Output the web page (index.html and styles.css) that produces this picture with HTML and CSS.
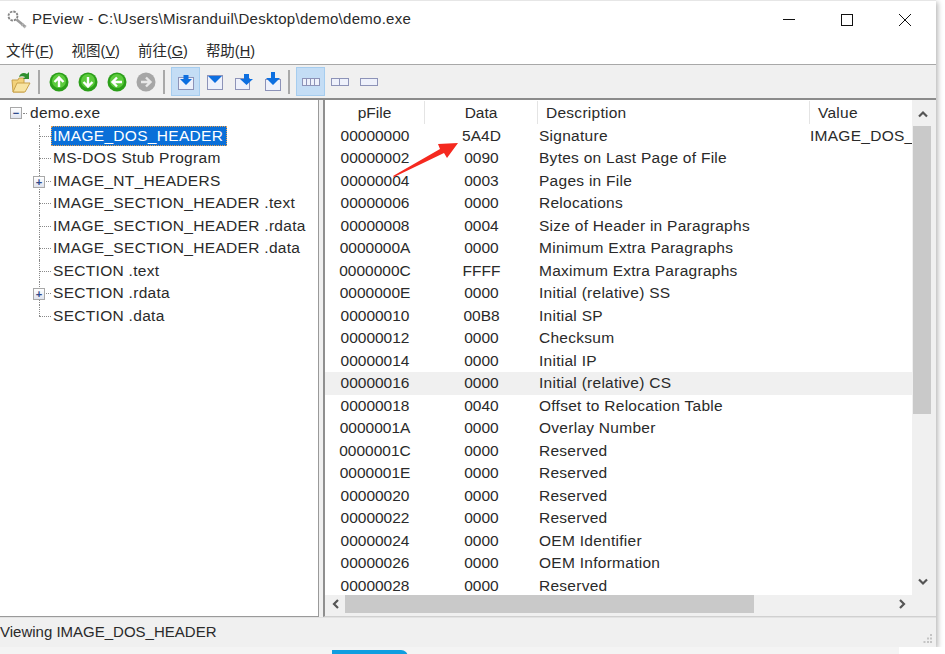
FILE: index.html
```html
<!DOCTYPE html>
<html lang="en">
<head>
<meta charset="utf-8">
<title>PEview</title>
<link rel="stylesheet" href="styles.css">
</head>
<body>
<div class="window">
  <header class="titlebar">
    <svg class="appicon" width="22" height="22" viewBox="0 0 22 22">
      <circle cx="7" cy="8" r="4.500" fill="none" stroke="#858585" stroke-width="1.800" stroke-dasharray="2.500 1"/>
      <path d="M10.500 11.500l9 7.500" stroke="#9a9a9a" stroke-width="2.600"/>
      <path d="M15.500 18l2-2.500M18 20l2-2.500" stroke="#b5b5b5" stroke-width="1.400"/>
    </svg>
    <span class="title">PEview - C:\Users\Misranduil\Desktop\demo\demo.exe</span>
    <div class="winctl">
      <svg width="14" height="14" viewBox="0 0 14 14"><path d="M1 6.500h12" stroke="#111" fill="none"/></svg>
      <svg width="14" height="14" viewBox="0 0 14 14"><rect x="1.500" y="1.500" width="11" height="11" stroke="#111" fill="none"/></svg>
      <svg width="14" height="14" viewBox="0 0 14 14"><path d="M1 1l12 12M13 1L1 13" stroke="#111" fill="none"/></svg>
    </div>
  </header>
  <nav class="menubar">
    <span>文件(<u>F</u>)</span><span>视图(<u>V</u>)</span><span>前往(<u>G</u>)</span><span>帮助(<u>H</u>)</span>
  </nav>
  <div class="toolbar">
    <svg class="tool open" width="20" height="24" viewBox="1 0 20 24">
      <path d="M2 10h6l1-2h5v14H3z" fill="#f3d27a" stroke="#c9a24a"/>
      <path d="M3 22l4-9h13l-5 9z" fill="#f8e4a3" stroke="#c9a24a"/>
      <path d="M9 7c1-4 5-5 8-3l2-2v7h-6l2-2c-2-1-4-1-6 0z" fill="#2f8f2f"/>
    </svg>
    <i class="sep first"></i>
    <svg class="nav" width="20" height="20" viewBox="0 0 20 20"><circle cx="10" cy="10" r="9.500" fill="#2c9f1a"/><circle cx="10" cy="9" r="7" fill="#5ccb3d"/><path d="M10 15V6M5.500 10L10 5.500l4.500 4.500" stroke="#fff" stroke-width="2.400" fill="none"/></svg>
    <svg class="nav" width="20" height="20" viewBox="0 0 20 20"><circle cx="10" cy="10" r="9.500" fill="#2c9f1a"/><circle cx="10" cy="9" r="7" fill="#5ccb3d"/><path d="M10 5v9M5.500 10L10 14.500l4.500-4.500" stroke="#fff" stroke-width="2.400" fill="none"/></svg>
    <svg class="nav" width="20" height="20" viewBox="0 0 20 20"><circle cx="10" cy="10" r="9.500" fill="#2c9f1a"/><circle cx="10" cy="9" r="7" fill="#5ccb3d"/><path d="M15 10H6M10 5.500L5.500 10l4.500 4.500" stroke="#fff" stroke-width="2.400" fill="none"/></svg>
    <svg class="nav" width="20" height="20" viewBox="0 0 20 20"><circle cx="10" cy="10" r="9.500" fill="#a6a6a6"/><path d="M5 10h9M10 5.500l4.500 4.500-4.500 4.500" stroke="#e8e8e8" stroke-width="2.400" fill="none"/></svg>
    <i class="sep second"></i>
    <span class="btn on">
      <svg width="20" height="20" viewBox="0 0 20 20"><rect x="2.500" y="5.500" width="15" height="12" fill="#eef1fb" stroke="#8d93b8"/><path d="M7.500 3h5v4h3.500L10 13 4 7h3.500z" fill="#0d6fe0"/></svg>
    </span>
    <span class="btn">
      <svg width="20" height="20" viewBox="0 0 20 20"><rect x="2.500" y="3.500" width="15" height="14" fill="#eef1fb" stroke="#8d93b8"/><path d="M3 4h14l-7 7z" fill="#0d6fe0"/></svg>
    </span>
    <span class="btn">
      <svg width="20" height="20" viewBox="0 0 20 20"><rect x="1.500" y="6.500" width="14" height="11" fill="#eef1fb" stroke="#8d93b8"/><path d="M10 2h5v5h4l-6.500 6L6 7h4z" fill="#0d6fe0"/></svg>
    </span>
    <span class="btn">
      <svg width="20" height="20" viewBox="0 0 20 20"><rect x="2.500" y="7.500" width="15" height="11" fill="#eef1fb" stroke="#8d93b8"/><path d="M8 0h4v6h5l-7 7-7-7h5z" fill="#0d6fe0"/></svg>
    </span>
    <i class="sep third"></i>
    <span class="btn on lay">
      <svg width="18" height="10" viewBox="0 0 18 10"><rect x=".5" y="1.500" width="17" height="7" fill="#eef1fb" stroke="#8d93b8"/><path d="M4.500 2v6M8.500 2v6M12.500 2v6" stroke="#8d93b8"/></svg>
    </span>
    <span class="btn lay">
      <svg width="18" height="10" viewBox="0 0 18 10"><rect x=".5" y="1.500" width="17" height="7" fill="#eef1fb" stroke="#8d93b8"/><path d="M8.500 2v6" stroke="#8d93b8"/></svg>
    </span>
    <span class="btn lay">
      <svg width="18" height="10" viewBox="0 0 18 10"><rect x=".5" y="1.500" width="17" height="7" fill="#eef1fb" stroke="#8d93b8"/></svg>
    </span>
  </div>
  <main class="panes">
    <section class="tree">
      <div class="root"><b class="box">−</b><span class="lead"></span><span>demo.exe</span></div>
      <div class="node"><span class="sel">IMAGE_DOS_HEADER</span></div>
      <div class="node"><span>MS-DOS Stub Program</span></div>
      <div class="node"><b class="box sub">+</b><span>IMAGE_NT_HEADERS</span></div>
      <div class="node"><span>IMAGE_SECTION_HEADER .text</span></div>
      <div class="node"><span>IMAGE_SECTION_HEADER .rdata</span></div>
      <div class="node"><span>IMAGE_SECTION_HEADER .data</span></div>
      <div class="node"><span>SECTION .text</span></div>
      <div class="node"><b class="box sub">+</b><span>SECTION .rdata</span></div>
      <div class="node last"><span>SECTION .data</span></div>
    </section>
    <section class="list">
      <div class="listmain">
        <div class="rows">
          <div class="row head"><span>pFile</span><span>Data</span><span>Description</span><span>Value</span></div>
          <div class="row"><span>00000000</span><span>5A4D</span><span>Signature</span><span>IMAGE_DOS_</span></div>
          <div class="row"><span>00000002</span><span>0090</span><span>Bytes on Last Page of File</span><span></span></div>
          <div class="row"><span>00000004</span><span>0003</span><span>Pages in File</span><span></span></div>
          <div class="row"><span>00000006</span><span>0000</span><span>Relocations</span><span></span></div>
          <div class="row"><span>00000008</span><span>0004</span><span>Size of Header in Paragraphs</span><span></span></div>
          <div class="row"><span>0000000A</span><span>0000</span><span>Minimum Extra Paragraphs</span><span></span></div>
          <div class="row"><span>0000000C</span><span>FFFF</span><span>Maximum Extra Paragraphs</span><span></span></div>
          <div class="row"><span>0000000E</span><span>0000</span><span>Initial (relative) SS</span><span></span></div>
          <div class="row"><span>00000010</span><span>00B8</span><span>Initial SP</span><span></span></div>
          <div class="row"><span>00000012</span><span>0000</span><span>Checksum</span><span></span></div>
          <div class="row"><span>00000014</span><span>0000</span><span>Initial IP</span><span></span></div>
          <div class="row hot"><span>00000016</span><span>0000</span><span>Initial (relative) CS</span><span></span></div>
          <div class="row"><span>00000018</span><span>0040</span><span>Offset to Relocation Table</span><span></span></div>
          <div class="row"><span>0000001A</span><span>0000</span><span>Overlay Number</span><span></span></div>
          <div class="row"><span>0000001C</span><span>0000</span><span>Reserved</span><span></span></div>
          <div class="row"><span>0000001E</span><span>0000</span><span>Reserved</span><span></span></div>
          <div class="row"><span>00000020</span><span>0000</span><span>Reserved</span><span></span></div>
          <div class="row"><span>00000022</span><span>0000</span><span>Reserved</span><span></span></div>
          <div class="row"><span>00000024</span><span>0000</span><span>OEM Identifier</span><span></span></div>
          <div class="row"><span>00000026</span><span>0000</span><span>OEM Information</span><span></span></div>
          <div class="row"><span>00000028</span><span>0000</span><span>Reserved</span><span></span></div>
        </div>
        <div class="vbar">
          <svg class="arrow" width="12" height="8" viewBox="0 0 12 8"><path d="M2 6.500l4-4 4 4" stroke="#555" stroke-width="2.200" fill="none"/></svg>
          <div class="vtrack"><div class="vthumb"></div></div>
          <svg class="arrow" width="12" height="8" viewBox="0 0 12 8"><path d="M2 1.500l4 4 4-4" stroke="#555" stroke-width="2.200" fill="none"/></svg>
        </div>
      </div>
      <div class="hbar">
        <svg class="arrow" width="8" height="12" viewBox="0 0 8 12"><path d="M6 2L2 6l4 4" stroke="#555" stroke-width="2.200" fill="none"/></svg>
        <div class="htrack"><div class="hthumb"></div></div>
        <svg class="arrow" width="8" height="12" viewBox="0 0 8 12"><path d="M2 2l4 4-4 4" stroke="#555" stroke-width="2.200" fill="none"/></svg>
      </div>
    </section>
    <svg class="redarrow" width="68" height="38" viewBox="0 0 68 38"><path d="M1 36L48 9 46 4l20-1L55 18l-3-5L2 37z" fill="#f5291f"/></svg>
  </main>
  <footer class="status">
    <span>Viewing IMAGE_DOS_HEADER</span>
    <svg class="grip" width="12" height="12" viewBox="0 0 12 12"><path d="M9 1h2v2H9zM6 4.500h2v2H6zM9 4.500h2v2H9zM2.500 8h2v2h-2zM6 8h2v2H6zM9 8h2v2H9z" fill="#c4c4c4"/></svg>
  </footer>
</div>
<div class="under"><div class="bluetab"></div></div>
</body>
</html>
```

FILE: styles.css
```css
* { box-sizing: border-box; }
html, body { margin: 0; height: 654px; overflow: hidden; background: #fff; }
body { font-family: "Liberation Sans", "Noto Sans CJK SC", sans-serif; color: #2a2a2a; }

.window {
  width: 936px;
  height: 647px;
  display: flex;
  flex-direction: column;
  background: #f0f0f0;
  border-top: 1px solid #e6e6e6;
  box-shadow: 2px 2px 5px rgba(0,0,0,.28);
}

.titlebar {
  height: 36px;
  background: #fff;
  display: flex;
  align-items: center;
  padding-left: 6px;
  flex: none;
}
.appicon { margin-right: 4px; }
.title { font-size: 15px; letter-spacing: .28px; margin-top: -1px; }
.winctl { margin-left: auto; display: flex; gap: 44px; padding-right: 24px; margin-top: 2px; }

.menubar {
  height: 28px;
  background: #fff;
  border-bottom: 1px solid #a8a8a8;
  display: flex;
  align-items: center;
  gap: 18px;
  padding: 0 0 2px 6px;
  font-size: 14.500px;
  flex: none;
}

.toolbar {
  height: 35px;
  flex: none;
  display: flex;
  align-items: center;
  padding-left: 11px;
  background: #f0f0f0;
  border-bottom: 2px solid #8b8b8b;
}
.tool.open { margin-right: 7px; }
.sep { width: 2px; height: 24px; background: #a9a9a9; flex: none; }
.sep.first { margin-right: 9px; }
.sep.second { margin: 0 6px 0 -2px; }
.sep.third { margin: 0 6px 0 1px; }
.nav { margin-right: 9px; flex: none; }
.btn {
  width: 29px;
  height: 29px;
  display: flex;
  align-items: center;
  justify-content: center;
  flex: none;
}
.btn.on { background: #c4ddf5; border: 1px solid #a6cdef; }

.panes { position: relative; flex: 1; display: flex; gap: 4px; min-height: 0; }

.tree {
  width: 319px;
  background: #fff;
  border-right: 1px solid #9a9a9a;
  border-bottom: 1px solid #9a9a9a;
  padding-top: 2px;
  font-size: 15.500px;
  letter-spacing: .3px;
}
.root { height: 22.500px; display: flex; align-items: center; padding-left: 10px; white-space: nowrap; }
.root .lead { width: 4px; border-top: 1px dotted #8a8a8a; margin: 0 3px 0 1px; flex: none; }
.node {
  height: 22.500px;
  display: flex;
  align-items: center;
  position: relative;
  white-space: nowrap;
  padding-left: 53px;
}
.node::before {
  content: "";
  position: absolute;
  left: 39px;
  top: 0;
  bottom: 0;
  border-left: 1px dotted #8a8a8a;
}
.node.last::before { bottom: 50%; }
.node::after {
  content: "";
  position: absolute;
  left: 39px;
  top: 50%;
  width: 12px;
  border-top: 1px dotted #8a8a8a;
}
.box {
  width: 12px;
  height: 12px;
  flex: none;
  border: 1px solid #a8a8a8;
  background: linear-gradient(#fff, #dfe3ee);
  color: #2e4a8c;
  font: 700 11px/10px "Liberation Sans", sans-serif;
  text-align: center;
  letter-spacing: 0;
}
.box.sub { position: absolute; left: 33px; top: 6px; z-index: 1; }
.sel {
  background: #0a6fd8;
  color: #fff;
  outline: 1px dotted #e8a050;
  outline-offset: -1px;
  padding: 1px 4px 1px 2px;
  margin-left: -2px;
  line-height: 18px;
}

.list {
  flex: 1;
  border-left: 2px solid #8f8f8f;
  border-bottom: 1px solid #d0d0d0;
  display: flex;
  flex-direction: column;
  min-width: 0;
  padding: 0 3px 3px 0;
  background: #f0f0f0;
}
.listmain { flex: 1; display: flex; min-height: 0; }
.rows { flex: 1; background: #fff; overflow: hidden; font-size: 15.500px; letter-spacing: .27px; padding-top: 1px; }
.row {
  display: grid;
  grid-template-columns: 100px 113px 272px 1fr;
  height: 22.500px;
  align-items: center;
  white-space: nowrap;
}
.row span { overflow: hidden; }
.row span:nth-child(1), .row span:nth-child(2) { text-align: center; letter-spacing: 0; }
.row span:nth-child(3) { padding-left: 1px; }
.row.hot { background: #f0f0f0; }
.row.head { height: 23.500px; }
.row.head span { height: 23px; line-height: 23px; border-right: 1px solid #e4e4e4; }
.row.head span:nth-child(3) { padding-left: 8px; }
.row.head span:nth-child(4) { padding-left: 8px; border-right: 0; }

.vbar { width: 21px; flex: none; display: flex; flex-direction: column; align-items: center; background: #f0f0f0; padding: 10px 0 9px; }
.vtrack { flex: 1; width: 100%; padding-top: 3px; }
.vthumb { height: 288px; background: #c9c9c9; width: 18px; margin: 5px auto 0 1px; }
.hbar { height: 18px; flex: none; display: flex; align-items: center; padding: 0 27px 0 7px; }
.htrack { flex: 1; height: 100%; padding-left: 5px; }
.hthumb { width: 409px; height: 100%; background: #c9c9c9; }

.redarrow { position: absolute; left: 392px; top: 40px; }

.status {
  height: 30px;
  flex: none;
  display: flex;
  align-items: center;
  justify-content: space-between;
  padding: 0 3px 2px 0;
  font-size: 15px;
  background: #f0f0f0;
  border-top: 1px solid #e2e2e2;
}
.grip { align-self: flex-end; margin-bottom: 0; }

.under {
  height: 7px;
  background: linear-gradient(90deg, #f4f4f4 899px, #fff 899px);
  overflow: hidden;
}
.bluetab { width: 76px; height: 8px; margin-left: 332px; margin-top: 3px; background: #0f9ee0; border-radius: 0 7px 0 0; }
```
